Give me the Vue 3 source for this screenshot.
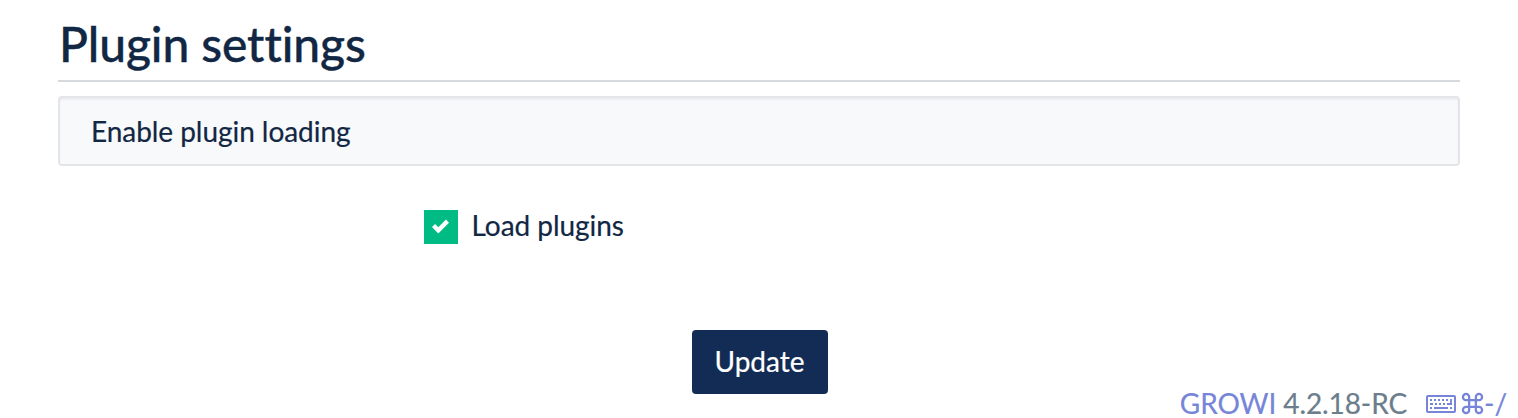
<template>
  <main class="page">
    <h2 class="title">Plugin settings</h2>
    <p class="well">Enable plugin loading</p>
    <label class="option">
      <span class="box"><svg viewBox="0 0 8 8" width="17" height="17"><path fill="#fff" d="M6.564.75l-3.59 3.612-1.538-1.55L0 4.26 2.974 7.25 8 2.193z" /></svg></span>
      <span class="label">Load plugins</span>
    </label>
    <button class="update" type="button"><span>Update</span></button>
    <footer class="system">
      <span class="brand">GROWI</span><span class="version">4.2.18-RC</span>
      <svg class="keyboard" viewBox="0 0 30 18" width="30" height="18" fill="none" stroke="#7685d8" stroke-width="2">
        <rect x="1" y="1" width="28" height="16" rx="1" />
        <path stroke-width="1.800" d="M4 5h2M8 5h2M12 5h2M16 5h2M20 5h2M4 9h3M9 9h2M13 9h2M17 9h2M21 9h5M25 4v5M4 13h2M8 13h14M24 13h2" />
      </svg>
      <svg class="command" viewBox="0 0 24 24" width="23" height="23" fill="none" stroke="#7685d8" stroke-width="2.400"><path d="M8.500 8.500H5.250a3.250 3.250 0 1 1 3.250-3.250v13.500a3.250 3.250 0 1 1-3.250-3.250h13.500a3.250 3.250 0 1 1-3.250 3.250V5.250a3.250 3.250 0 1 1 3.250 3.250z" /></svg>
      <span class="keys">-/</span>
    </footer>
  </main>
</template>

<script setup>
</script>

<style>
body { margin: 0; background: #fff; overflow: hidden; }
</style>
<style scoped>
.page { box-sizing: border-box; height: 418px; padding: 0 58px; font: 28px/42px Lato, "Liberation Sans", sans-serif; font-variant-ligatures: none; letter-spacing: -.05px; -webkit-text-stroke: .2px currentColor; color: #112744; display: flex; flex-direction: column; }
.title { margin: 0; padding: 15px 0 7px 1px; height: 58px; font-size: 48px; line-height: 58px; font-weight: 500; letter-spacing: -.1px; -webkit-text-stroke-width: .35px; border-bottom: 2px solid #d6d9de; }
.well { box-sizing: border-box; margin: 14px 0 0; height: 70px; padding: 12px 31px; border: 2px solid #e3e5e8; border-radius: 4px; background: #f8f9fb; box-shadow: inset 0 2px 2px rgba(0,0,0,.05); }
.option { display: flex; align-items: center; gap: 13.500px; margin: 40px 0 0 366px; height: 42px; }
.label { padding-bottom: 4px; }
.box { width: 34px; height: 34px; background: #00bb83; display: flex; align-items: center; justify-content: center; }
.box svg { margin: 0 2px 2px 0; }
.update { width: 136px; height: 64px; margin: 82px 0 0 634px; padding: 0 1px 2px 0; border: 0; border-radius: 4px; background: #122c55; color: #fff; font: inherit; font-variant-ligatures: none; flex-shrink: 0; }
.system { display: flex; align-items: center; height: 24px; margin: -3px -47px 0 auto; color: #7685d8; }
.brand { margin-left: 1px; }
.version { color: #6c7d8c; margin: 0 19px 0 7px; letter-spacing: -.1px; }
.keyboard { margin-top: 2px; }
.command { margin-left: 5px; }
</style>
